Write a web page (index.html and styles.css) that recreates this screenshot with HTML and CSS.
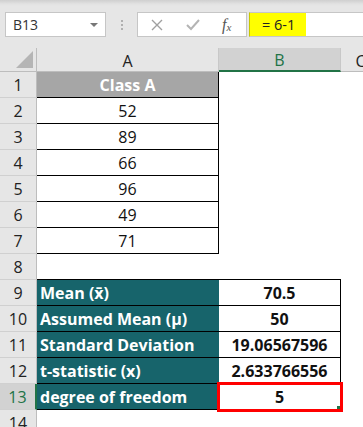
FILE: index.html
```html
<!DOCTYPE html>
<html lang="en">
<head>
    <meta charset="UTF-8">
    <meta name="viewport" content="width=device-width, initial-scale=1.0">
    <title>t-statistic - degree of freedom</title>
    <link rel="stylesheet" href="styles.css">
</head>
<body>
    <div class="toolbar">
        <div class="name-box">
            <span>B13</span>
            <span class="drop"></span>
        </div>
        <div class="grip"><i></i><i></i><i></i></div>
        <div class="fx-buttons">
            <svg class="btn-x" width="12" height="12" viewBox="0 0 12 12"><path d="M1 1 L11 11 M11 1 L1 11" stroke="#a0a0a0" stroke-width="1.4" fill="none"/></svg>
            <svg class="btn-ok" width="14" height="12" viewBox="0 0 14 12"><path d="M1 6 L5 10 L13 1" stroke="#b4b4b4" stroke-width="2" fill="none"/></svg>
            <span class="fx">f<sub>x</sub></span>
        </div>
        <div class="formula">
            <span class="formula-text">= 6-1</span>
        </div>
    </div>

    <div class="sheet">
        <div class="corner"><span class="tri"></span></div>
        <div class="col-head">A</div>
        <div class="col-head active">B</div>
        <div class="col-head">C</div>

        <div class="row-head">1</div>
        <div class="cell title">Class A</div>
        <div class="cell"></div>
        <div class="cell"></div>

        <div class="row-head">2</div>
        <div class="cell boxed">52</div>
        <div class="cell"></div>
        <div class="cell"></div>

        <div class="row-head">3</div>
        <div class="cell boxed">89</div>
        <div class="cell"></div>
        <div class="cell"></div>

        <div class="row-head">4</div>
        <div class="cell boxed">66</div>
        <div class="cell"></div>
        <div class="cell"></div>

        <div class="row-head">5</div>
        <div class="cell boxed">96</div>
        <div class="cell"></div>
        <div class="cell"></div>

        <div class="row-head">6</div>
        <div class="cell boxed">49</div>
        <div class="cell"></div>
        <div class="cell"></div>

        <div class="row-head">7</div>
        <div class="cell boxed">71</div>
        <div class="cell"></div>
        <div class="cell"></div>

        <div class="row-head">8</div>
        <div class="cell under"></div>
        <div class="cell under"></div>
        <div class="cell"></div>

        <div class="row-head">9</div>
        <div class="cell label">Mean (x̄)</div>
        <div class="cell value">70.5</div>
        <div class="cell"></div>

        <div class="row-head">10</div>
        <div class="cell label">Assumed Mean (μ)</div>
        <div class="cell value">50</div>
        <div class="cell"></div>

        <div class="row-head">11</div>
        <div class="cell label">Standard Deviation</div>
        <div class="cell value">19.06567596</div>
        <div class="cell"></div>

        <div class="row-head">12</div>
        <div class="cell label">t-statistic (x)</div>
        <div class="cell value">2.633766556</div>
        <div class="cell"></div>

        <div class="row-head active">13</div>
        <div class="cell label">degree of freedom</div>
        <div class="cell value selected">5<span class="handle"></span></div>
        <div class="cell"></div>

        <div class="row-head">14</div>
        <div class="cell"></div>
        <div class="cell"></div>
        <div class="cell"></div>
    </div>
</body>
</html>
```

FILE: styles.css
```css
body {
    margin: 0;
    padding: 0;
    width: 363px;
    height: 427px;
    overflow: hidden;
    background-color: #fff;
    font-family: "Open Sans", Arial, sans-serif;
}
.toolbar {
    height: 48px;
    box-sizing: border-box;
    padding-top: 12px;
    background: linear-gradient(#cfcfcf 0, #e2e2e2 4px, #e6e6e6 6px);
    display: flex;
    align-items: flex-start;
}
.name-box {
    margin-left: 5px;
    width: 101px;
    height: 25px;
    box-sizing: border-box;
    background-color: #fff;
    border: 1px solid #c6c6c6;
    display: flex;
    align-items: center;
    justify-content: space-between;
    padding: 0 7px 0 7px;
    font-size: 14px;
    color: #333;
}
.name-box .drop {
    width: 0;
    height: 0;
    border-left: 4px solid transparent;
    border-right: 4px solid transparent;
    border-top: 4px solid #777;
}
.grip {
    width: 31px;
    height: 25px;
    display: flex;
    flex-direction: column;
    align-items: center;
    justify-content: center;
    gap: 2px;
}
.grip i {
    width: 2px;
    height: 2px;
    background-color: #b0b0b0;
}
.fx-buttons {
    width: 110px;
    height: 25px;
    box-sizing: border-box;
    background-color: #fff;
    border: 1px solid #c6c6c6;
    display: flex;
    align-items: center;
    padding-left: 13px;
}
.btn-ok {
    margin-left: 23px;
}
.fx {
    margin-left: 22px;
    font-family: "Liberation Serif", serif;
    font-style: italic;
    font-size: 16px;
    color: #555;
}
.fx sub {
    font-size: 11px;
    vertical-align: -1px;
}
.formula {
    margin-left: 2px;
    flex: 1;
    height: 25px;
    box-sizing: border-box;
    border-top: 1px solid #c6c6c6;
    border-bottom: 1px solid #c6c6c6;
    background: linear-gradient(to right, #ffff00 0, #ffff00 56px, #fff 56px);
    border-left: 1px solid #c8c800;
    display: flex;
    align-items: center;
}
.formula-text {
    margin-left: 12px;
    font-size: 14.5px;
    color: #222;
}
.sheet {
    display: grid;
    grid-template-columns: 37px 182px 122px 40px;
    grid-template-rows: 24px;
    grid-auto-rows: 26px;
    width: 381px;
}
.corner {
    background-color: #e6e6e6;
    border-right: 1px solid #bdbdbd;
    border-bottom: 1px solid #bdbdbd;
    box-sizing: border-box;
    position: relative;
}
.corner .tri {
    position: absolute;
    right: 3px;
    bottom: 3px;
    width: 0;
    height: 0;
    border-left: 17px solid transparent;
    border-bottom: 17px solid #b5b5b5;
}
.col-head {
    background-color: #e6e6e6;
    border-right: 1px solid #c8c8c8;
    border-bottom: 1px solid #bdbdbd;
    box-sizing: border-box;
    display: flex;
    align-items: center;
    justify-content: center;
    font-size: 16px;
    color: #222;
    padding-top: 2px;
}
.col-head.active {
    background-color: #d2d2d2;
    border-bottom: 2px solid #217346;
    color: #217346;
}
.row-head {
    background-color: #e6e6e6;
    border-right: 1px solid #bdbdbd;
    border-bottom: 1px solid #d0d0d0;
    box-sizing: border-box;
    display: flex;
    align-items: center;
    justify-content: center;
    font-size: 16px;
    color: #222;
    padding-top: 1px;
}
.row-head.active {
    background-color: #d2d2d2;
    border-right: 2px solid #217346;
    color: #217346;
}
.cell {
    box-sizing: border-box;
    background-color: #fff;
    display: flex;
    align-items: center;
    font-size: 16px;
    color: #111;
    padding-top: 1px;
    white-space: nowrap;
}
.cell.title {
    background-color: #a6a6a6;
    color: #fff;
    font-weight: bold;
    justify-content: center;
    border-right: 1px solid #000;
    border-bottom: 1px solid #000;
}
.cell.boxed {
    justify-content: center;
    border-right: 1px solid #000;
    border-bottom: 1px solid #000;
}
.cell.under {
    border-bottom: 1px solid #000;
}
.cell.label {
    background-color: #17646b;
    color: #fff;
    font-weight: bold;
    padding-left: 3px;
    border-bottom: 1px solid #000;
}
.cell.value {
    justify-content: center;
    font-weight: bold;
    border-right: 1px solid #000;
    border-bottom: 1px solid #000;
}
.cell.selected {
    position: relative;
}
.cell.selected::after {
    content: "";
    position: absolute;
    top: -2px;
    left: -2px;
    right: -3px;
    bottom: -3px;
    border: 3px solid #ff0000;
}
.cell.selected .handle {
    position: absolute;
    right: 0;
    bottom: 0;
    width: 3px;
    height: 3px;
    background-color: #217346;
}
```
